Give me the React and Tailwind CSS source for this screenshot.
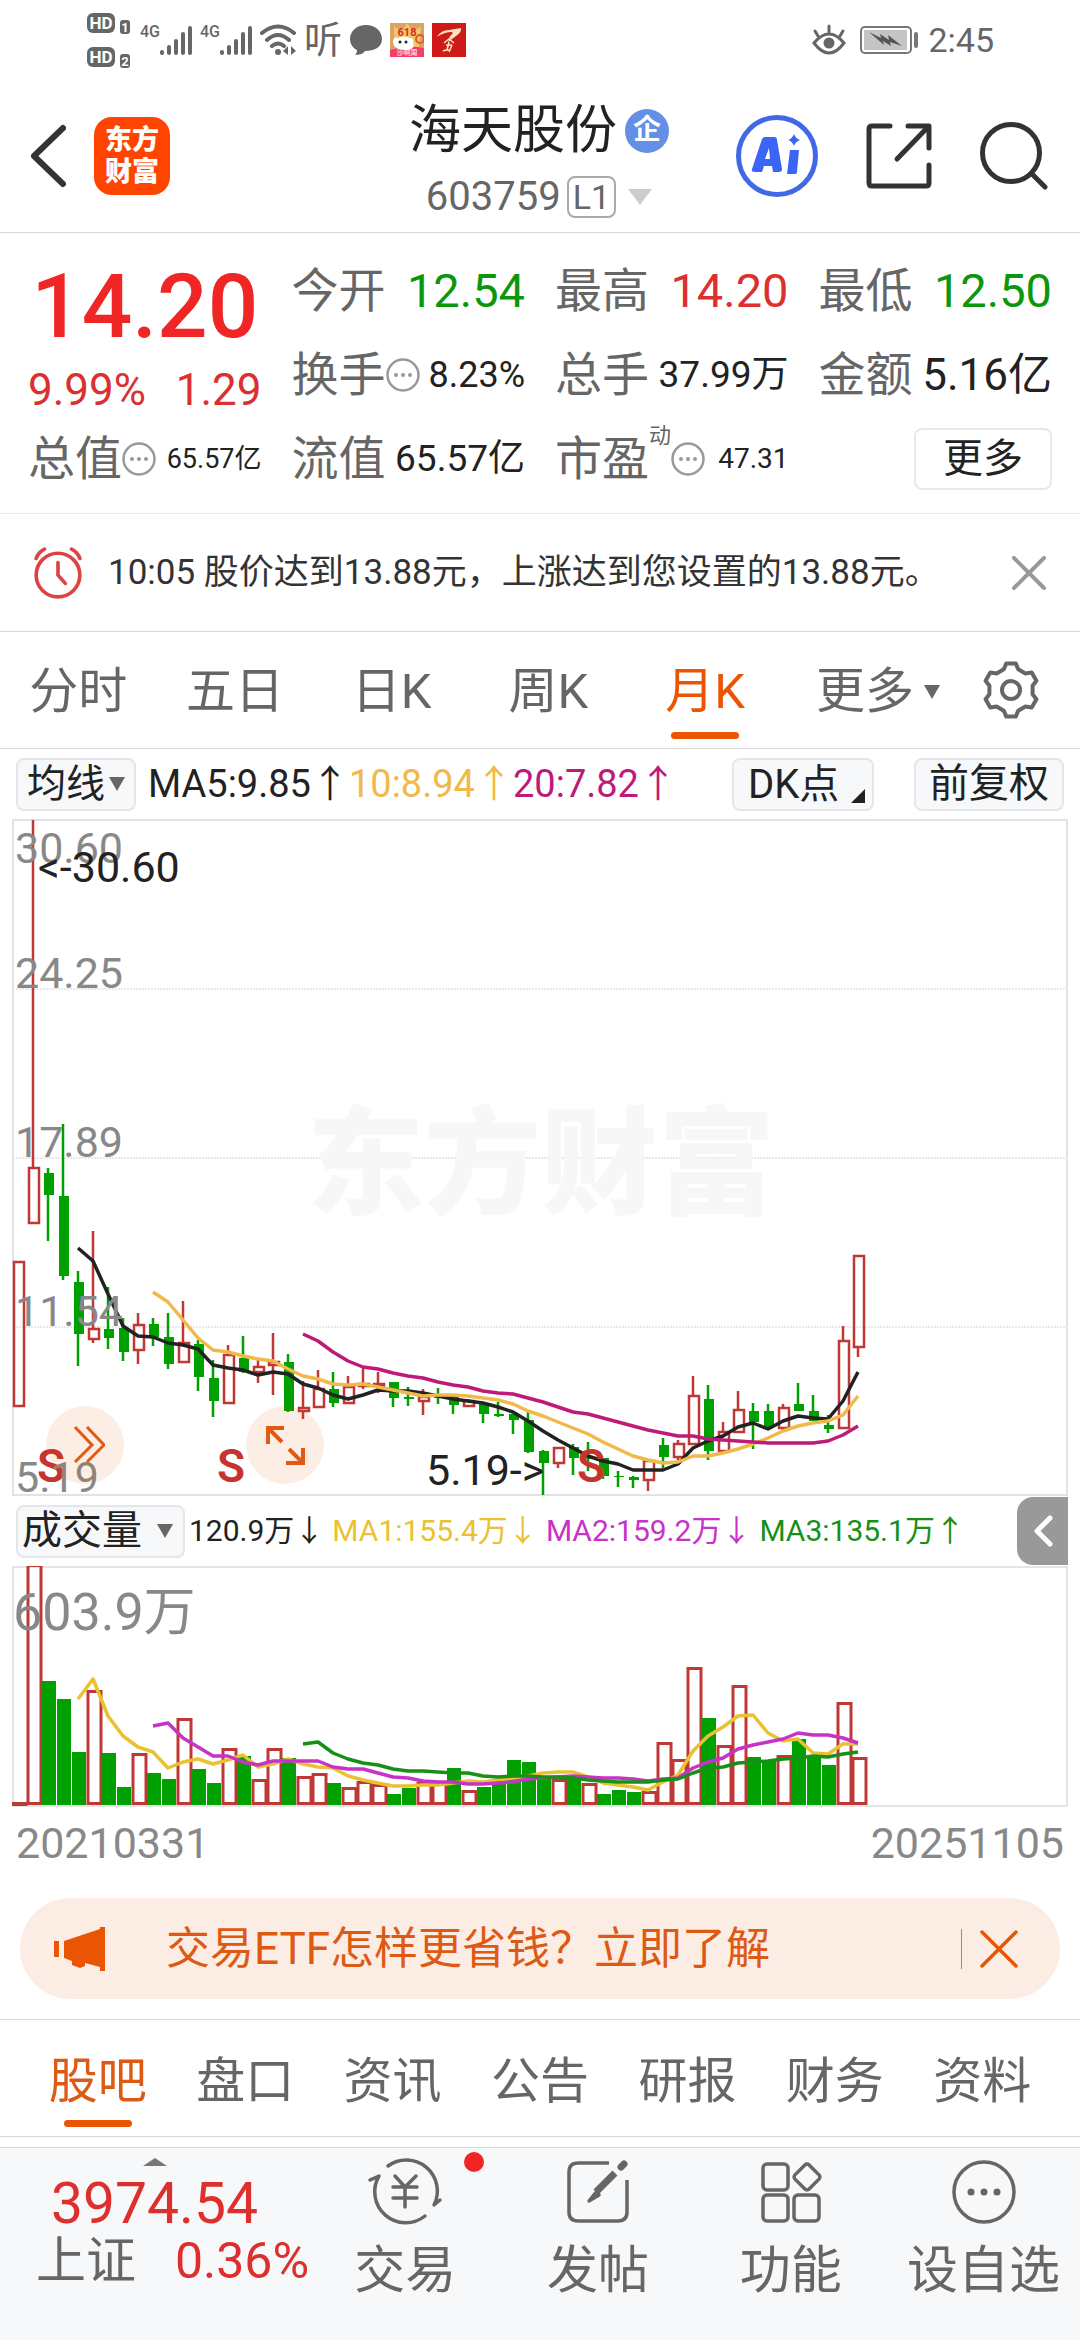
import React, { useState } from "react";

// [open side, wick top, body top, body bottom, wick bottom], in chart units
const candles = [
    ["r", 1260, 1260, 1406, 1406], ["r", 819, 1166, 1223, 1223], ["g", 1167, 1172, 1194, 1240], ["g", 1123, 1195, 1275, 1279],
    ["g", 1270, 1281, 1333, 1365], ["r", 1230, 1327, 1339, 1342], ["g", 1286, 1328, 1337, 1348], ["g", 1317, 1327, 1351, 1360],
    ["r", 1312, 1323, 1350, 1363], ["g", 1317, 1323, 1336, 1345], ["g", 1312, 1336, 1363, 1368], ["r", 1300, 1341, 1362, 1362],
    ["g", 1339, 1343, 1376, 1390], ["g", 1359, 1377, 1400, 1416], ["r", 1344, 1353, 1403, 1403], ["g", 1335, 1357, 1371, 1372],
    ["r", 1359, 1365, 1372, 1382], ["r", 1332, 1360, 1365, 1394], ["g", 1353, 1361, 1410, 1411], ["r", 1380, 1406, 1411, 1418],
    ["r", 1369, 1387, 1407, 1407], ["g", 1371, 1388, 1402, 1406], ["r", 1375, 1385, 1403, 1403], ["r", 1367, 1382, 1386, 1388],
    ["r", 1371, 1382, 1386, 1392], ["g", 1381, 1381, 1397, 1406], ["g", 1386, 1396, 1398, 1405], ["r", 1388, 1395, 1401, 1414],
    ["g", 1387, 1395, 1397, 1403], ["g", 1395, 1395, 1404, 1413], ["r", 1398, 1399, 1406, 1406], ["g", 1402, 1402, 1413, 1422],
    ["g", 1401, 1413, 1415, 1416], ["g", 1413, 1413, 1419, 1433], ["g", 1410, 1419, 1451, 1452], ["g", 1449, 1450, 1462, 1494],
    ["r", 1446, 1446, 1463, 1467], ["g", 1443, 1446, 1457, 1474], ["g", 1441, 1455, 1458, 1470], ["g", 1457, 1457, 1475, 1478],
    ["g", 1470, 1475, 1476, 1486], ["g", 1475, 1476, 1479, 1487], ["r", 1459, 1459, 1480, 1490], ["g", 1437, 1444, 1456, 1467],
    ["r", 1439, 1442, 1457, 1459], ["r", 1375, 1394, 1444, 1444], ["g", 1384, 1398, 1450, 1459], ["r", 1421, 1430, 1451, 1451],
    ["r", 1390, 1408, 1432, 1432], ["g", 1402, 1410, 1421, 1448], ["g", 1403, 1410, 1427, 1428], ["r", 1403, 1406, 1428, 1431],
    ["g", 1382, 1403, 1410, 1410], ["g", 1394, 1410, 1420, 1420], ["g", 1414, 1424, 1428, 1432], ["r", 1325, 1339, 1428, 1428],
    ["r", 1254, 1254, 1347, 1356],
];

const ma5 = [1247, 1260, 1293, 1325, 1335, 1336, 1342, 1344, 1348, 1364, 1367, 1369, 1374, 1371, 1373, 1383, 1387, 1394, 1398, 1394, 1389, 1390, 1390, 1392, 1395, 1398, 1400, 1402, 1406, 1411, 1420, 1430, 1439, 1447, 1455, 1460, 1463, 1469, 1469, 1469, 1463, 1447, 1440, 1435, 1426, 1422, 1428, 1420, 1415, 1417, 1418, 1400, 1371];
const ma10 = [1291, 1301, 1319, 1337, 1349, 1351, 1355, 1358, 1360, 1368, 1375, 1378, 1383, 1384, 1383, 1386, 1389, 1392, 1395, 1394, 1394, 1395, 1397, 1399, 1403, 1410, 1415, 1421, 1427, 1433, 1441, 1448, 1455, 1459, 1462, 1461, 1455, 1455, 1452, 1448, 1443, 1437, 1430, 1425, 1422, 1420, 1414, 1395];
const ma20 = [1333, 1340, 1351, 1360, 1366, 1368, 1372, 1375, 1377, 1381, 1384, 1386, 1390, 1392, 1393, 1397, 1401, 1406, 1411, 1413, 1417, 1421, 1425, 1429, 1432, 1435, 1435, 1438, 1439, 1440, 1441, 1442, 1442, 1442, 1442, 1440, 1434, 1425];

// top of each volume bar
const volumes = [
    1801, 1563, 1680, 1698, 1751, 1689, 1752, 1786, 1752, 1772, 1778, 1717, 1768, 1782, 1747, 1755, 1778, 1747, 1757,
    1775, 1772, 1782, 1786, 1780, 1783, 1793, 1787, 1781, 1782, 1767, 1789, 1786, 1778, 1759, 1761, 1777, 1778, 1776,
    1782, 1793, 1789, 1791, 1790, 1741, 1758, 1666, 1717, 1744, 1684, 1756, 1759, 1754, 1738, 1755, 1764, 1701, 1756,
];
// bars whose colour differs from the candle above them
const redVolumes = [28, 38, 43];

const vol5 = [1698, 1678, 1715, 1735, 1746, 1751, 1767, 1761, 1758, 1763, 1759, 1754, 1766, 1763, 1758, 1763, 1766, 1767, 1775, 1779, 1782, 1785, 1785, 1784, 1784, 1782, 1780, 1781, 1779, 1777, 1775, 1772, 1771, 1771, 1776, 1782, 1784, 1786, 1789, 1781, 1774, 1750, 1735, 1726, 1715, 1714, 1732, 1740, 1738, 1752, 1753, 1743, 1743];
const vol10 = [1725, 1722, 1737, 1746, 1755, 1755, 1761, 1764, 1760, 1760, 1760, 1760, 1766, 1768, 1768, 1772, 1776, 1777, 1780, 1781, 1781, 1783, 1783, 1782, 1781, 1778, 1777, 1776, 1775, 1776, 1777, 1777, 1778, 1780, 1778, 1777, 1767, 1761, 1757, 1748, 1744, 1741, 1738, 1732, 1734, 1734, 1737, 1742];
const vol20 = [1743, 1741, 1752, 1758, 1762, 1764, 1768, 1770, 1770, 1771, 1772, 1772, 1775, 1776, 1775, 1775, 1776, 1776, 1777, 1779, 1780, 1781, 1781, 1781, 1779, 1778, 1772, 1767, 1766, 1762, 1761, 1760, 1758, 1757, 1755, 1756, 1753, 1751];

const RED = "#c03835";
const GREEN = "#00a000";

const xAt = (i) => 18 + 15 * i;

const points = (start, values) => values.map((y, i) => `${xAt(start + i)},${y}`).join(" ");

function Line({ start, values, color }) {
    return <polyline points={points(start, values)} fill="none" stroke={color} strokeWidth="3.500" strokeLinejoin="round" />;
}

function SignalBars() {
    return (
        <svg className="w-8 h-8" viewBox="0 0 32 32" stroke="#666" strokeWidth="4" strokeLinecap="round">
            <path d="M2 28v1M9 23v6M16 17v12M23 10v19M30 4v25" />
        </svg>
    );
}

function StatusBar() {
    return (
        <div className="flex items-center justify-between h-20 px-[86px] text-[#666]">
            <div className="flex items-center">
                <svg className="w-[46px] h-14" viewBox="0 0 46 56" fill="#666">
                    <rect x="1" y="1" width="28" height="20" rx="6" />
                    <rect x="34" y="8" width="10" height="14" rx="3" />
                    <rect x="1" y="35" width="28" height="20" rx="6" />
                    <rect x="34" y="42" width="10" height="14" rx="3" />
                    <g fill="#fff" fontFamily="Roboto, sans-serif" fontWeight="700" textAnchor="middle">
                        <text x="15" y="17" fontSize="17">HD</text>
                        <text x="15" y="51" fontSize="17">HD</text>
                        <text x="39" y="20" fontSize="13">1</text>
                        <text x="39" y="54" fontSize="13">2</text>
                    </g>
                </svg>
                <span className="ml-2 mb-4 text-[16px] leading-4 font-medium">4G</span>
                <SignalBars />
                <span className="ml-2 mb-4 text-[16px] leading-4 font-medium">4G</span>
                <SignalBars />
                <svg className="ml-2 w-9 h-8" viewBox="0 0 36 32" fill="none" stroke="#666" strokeWidth="4" strokeLinecap="round">
                    <path d="M2 9Q18 -4 34 9M7 16Q18 6 29 16M12 22Q18 17 24 22" />
                    <circle cx="18" cy="28" r="3" fill="#666" stroke="none" />
                    <path d="M28 22v9l-5-4zM31 22v9l5-4z" fill="#666" stroke="none" />
                </svg>
                <span className="ml-2 text-[38px] leading-8">听</span>
                <svg className="ml-2 w-8 h-8" viewBox="0 0 32 32" fill="#666">
                    <path d="M16 1C7 1 0 7 0 15c0 5 3 9 7 11 0 3-1 4-2 5 4 0 8-1 10-4 10 0 17-4 17-12S25 1 16 1z" />
                </svg>
                <svg className="ml-2 w-[34px] h-[34px]" viewBox="0 0 34 34">
                    <rect width="34" height="34" fill="#dba265" />
                    <path d="M4 3l8 6 5-9 6 8 8-4-2 20H4z" fill="#f5c56c" />
                    <path d="M0 27q17-6 34-2v9H0z" fill="#ef3f6b" />
                    <path d="M3 18q1-5 5-3 6-3 12 0 4 0 3 4 3 8-8 8-12 0-12-9z" fill="#fff" />
                    <circle cx="10" cy="19" r="1.5" fill="#222" />
                    <circle cx="16" cy="19" r="1.5" fill="#222" />
                    <circle cx="30" cy="16" r="4" fill="none" stroke="#e05a2a" strokeWidth="2" />
                    <text x="17" y="13" fontSize="11" fontWeight="700" fill="#d8301c" textAnchor="middle">618</text>
                    <text x="17" y="32" fontSize="7" fill="#fff" textAnchor="middle">沙啊周</text>
                </svg>
                <svg className="ml-2 w-[34px] h-[34px]" viewBox="0 0 34 34">
                    <rect width="34" height="34" fill="#d01a1a" />
                    <path d="M5 14Q9 7 17 7l12-2q1 4-5 8l-8 6 2-6q4-3 2-4-8 0-15 5z" fill="#fbe3c0" />
                    <path d="M12 20l5-4 5 4M14 22h6M17 19l-2 8M11 28q5-2 7 0M20 22l-3 7" fill="none" stroke="#fbe3c0" strokeWidth="1.500" />
                </svg>
            </div>
            <div className="flex items-center">
                <svg className="w-[34px] h-8" viewBox="0 0 34 32" fill="none" stroke="#666" strokeWidth="3" strokeLinecap="round">
                    <path d="M2 19Q17 1 32 19Q17 39 2 19zM17 2v6M3 7l3 5M31 7l-3 5" />
                    <circle cx="17" cy="19" r="5.500" fill="#666" stroke="none" />
                </svg>
                <svg className="ml-3.5 w-[60px] h-7" viewBox="0 0 60 28">
                    <rect x="1" y="1" width="50" height="26" rx="4" fill="none" stroke="#777" strokeWidth="2" />
                    <rect x="4" y="4" width="43" height="20" fill="#c4c4c4" />
                    <path d="M9 6l12 6-1-4 9 6-1-5 14 11-12-4 1 4-8-5 1 4z" fill="#555" />
                    <rect x="54" y="6" width="4" height="16" rx="2" fill="#777" />
                </svg>
                <span className="ml-2 text-[34px] leading-9">2:45</span>
            </div>
        </div>
    );
}

function Header() {
    return (
        <header className="grid grid-cols-[1fr_auto_1fr] items-center h-[153px] pl-[30px] pr-8 border-b border-[#d8d8d8]">
            <div className="flex items-center gap-7">
                <button aria-label="返回">
                    <svg className="w-9 h-16" viewBox="0 0 36 64" fill="none" stroke="#333" strokeWidth="6" strokeLinecap="round" strokeLinejoin="round">
                        <path d="M33 4L4 32l29 28" />
                    </svg>
                </button>
                <a href="#home" className="flex flex-col items-center justify-center w-[76px] h-[78px] rounded-[18px] bg-[#ff4400] text-white text-[27px] leading-8 font-black">
                    <span>东方</span>
                    <span>财富</span>
                </a>
            </div>
            <div className="flex flex-col items-center pt-4">
                <div className="flex items-center h-[66px] gap-2">
                    <h1 className="text-[52px] leading-[66px] text-[#222]">海天股份</h1>
                    <span className="w-11 h-11 rounded-full bg-[#6390e6] text-white text-[28px] leading-[42px] font-bold text-center">企</span>
                </div>
                <button className="flex items-center h-[66px] text-[40px] text-[#666]">
                    <span>603759</span>
                    <span className="ml-1.5 px-1 h-[42px] leading-[38px] border-2 border-[#aaa] rounded-lg text-[34px]">L1</span>
                    <svg className="ml-3 w-6 h-4" viewBox="0 0 24 16" fill="#ccc"><path d="M0 0h24L12 16z" /></svg>
                </button>
            </div>
            <div className="flex items-center justify-end gap-12">
                <button aria-label="AI">
                    <svg className="w-[82px] h-[82px]" viewBox="0 0 82 82" fill="#3b66f5">
                        <circle cx="41" cy="41" r="38.500" fill="none" stroke="#4168e6" strokeWidth="5" />
                        <path fillRule="evenodd" d="M26 24q1-2 3-2h9q3 0 3 3l5 29q0 3-3 3h-6l-1-6h-8l-2 6h-7q-4 0-3-3zM33 33l-4 11h5z" />
                        <path d="M54 35h9l-2 22q0 2-2 2h-8z" />
                        <path d="M58 19q2 5 6 6-5 2-6 6-2-5-6-6 4-1 6-6z" />
                    </svg>
                </button>
                <button aria-label="分享">
                    <svg className="w-[66px] h-[66px]" viewBox="0 0 66 66" fill="none" stroke="#333" strokeWidth="5" strokeLinecap="round" strokeLinejoin="round">
                        <path d="M24 3H6Q3 3 3 6v54q0 3 3 3h54q3 0 3-3V42M42 3h21v22M62 4L31 36" />
                    </svg>
                </button>
                <button aria-label="搜索">
                    <svg className="w-[68px] h-[68px]" viewBox="0 0 68 68" fill="none" stroke="#333" strokeWidth="5" strokeLinecap="round">
                        <circle cx="31" cy="31" r="28.500" />
                        <path d="M52 52l13 13" />
                    </svg>
                </button>
            </div>
        </header>
    );
}

function Dots() {
    return (
        <svg className="shrink-0 w-[34px] h-[34px]" viewBox="0 0 34 34" fill="#999">
            <circle cx="17" cy="17" r="15.500" fill="none" stroke="#999" strokeWidth="2.500" />
            <circle cx="10" cy="17" r="2" />
            <circle cx="17" cy="17" r="2" />
            <circle cx="24" cy="17" r="2" />
        </svg>
    );
}

function Quote({ label, dots, sup, children }) {
    return (
        <div className="flex items-center justify-between whitespace-nowrap">
            <div className="flex items-center">
                <span className="text-[47px] text-[#666]">{label}</span>
                {sup && <sup className="self-start text-[22px] leading-6 top-0 text-[#666]">{sup}</sup>}
                {dots && <Dots />}
            </div>
            {children}
        </div>
    );
}

function QuotePanel() {
    return (
        <section className="grid grid-cols-4 auto-rows-[84px] gap-x-[30px] px-[28px] pt-4 pb-3 border-b border-[#ececec] text-[#222]">
            <div className="row-span-2 flex flex-col justify-between pt-4">
                <strong className="text-center text-[89px] leading-[84px] font-medium text-[#f02525]">14.20</strong>
                <div className="flex justify-between text-[44px] leading-[54px] text-[#db302f]">
                    <span>9.99%</span>
                    <span>1.29</span>
                </div>
            </div>
            <Quote label="今开"><span className="text-[47px] text-[#0b970b]">12.54</span></Quote>
            <Quote label="最高"><span className="text-[47px] text-[#db302f]">14.20</span></Quote>
            <Quote label="最低"><span className="text-[47px] text-[#0b970b]">12.50</span></Quote>
            <Quote label="换手" dots><span className="text-[36px]">8.23%</span></Quote>
            <Quote label="总手"><span className="text-[37px]">37.99万</span></Quote>
            <Quote label="金额"><span className="text-[44px]">5.16亿</span></Quote>
            <Quote label="总值" dots><span className="text-[27px]">65.57亿</span></Quote>
            <Quote label="流值"><span className="text-[37px]">65.57亿</span></Quote>
            <Quote label="市盈" sup="动" dots><span className="text-[28px]">47.31</span></Quote>
            <div className="flex items-center justify-end">
                <button className="w-[138px] h-[62px] border-2 border-[#e8e8e8] rounded-lg text-[40px] leading-none">更多</button>
            </div>
        </section>
    );
}

function AlertBar() {
    return (
        <div className="flex items-center h-[118px] px-[34px] border-b border-[#d8d8d8]">
            <svg className="w-[48px] h-[52px]" viewBox="0 0 46 50" fill="none" stroke="#dd4343" strokeWidth="3.500" strokeLinecap="round">
                <circle cx="23" cy="27" r="21" />
                <path d="M23 15v12l7 8M2 11Q4 5 10 2M44 11Q42 5 36 2" />
            </svg>
            <p className="grow ml-[26px] text-[35px] leading-[50px] text-[#333]">10:05 股价达到13.88元，上涨达到您设置的13.88元。</p>
            <button aria-label="关闭">
                <svg className="w-[34px] h-[34px]" viewBox="0 0 34 34" stroke="#999" strokeWidth="4" strokeLinecap="round">
                    <path d="M2 2l30 30M32 2L2 32" />
                </svg>
            </button>
        </div>
    );
}

const gearPath = [-90, -30, 30, 90, 150, 210]
    .flatMap((a) => [[a - 19, 22], [a - 10, 27], [a + 10, 27], [a + 19, 22]])
    .map(([a, r]) => `${(29 + r * Math.cos((a * Math.PI) / 180)).toFixed(1)},${(29 + r * Math.sin((a * Math.PI) / 180)).toFixed(1)}`)
    .join(" ");

function PeriodTabs() {
    const [active, setActive] = useState("月K");

    return (
        <nav className="flex items-stretch h-[117px] border-b border-[#d8d8d8] text-[49px] text-[#666]">
            {["分时", "五日", "日K", "周K", "月K"].map((tab) => (
                <button key={tab} onClick={() => setActive(tab)} className={tab === active ? "relative flex-1 pt-1 text-[#ea5504]" : "relative flex-1 pt-1"}>
                    {tab}
                    {tab === active && <span className="absolute bottom-[9px] left-1/2 -translate-x-1/2 w-[68px] h-[7px] rounded-full bg-[#ea5504]" />}
                </button>
            ))}
            <button className="flex-1 flex items-center justify-end gap-2.5 pt-1 pr-0.5">
                更多
                <svg className="w-4 h-3.5" viewBox="0 0 16 14" fill="#666"><path d="M0 0h16L8 14z" /></svg>
            </button>
            <button className="flex items-center justify-center w-[138px]" aria-label="设置">
                <svg className="w-[58px] h-[58px]" viewBox="0 0 58 58" fill="none" stroke="#666" strokeWidth="4" strokeLinejoin="round">
                    <polygon points={gearPath} />
                    <circle cx="29" cy="29" r="9" />
                </svg>
            </button>
        </nav>
    );
}

function PriceChart() {
    return (
        <div className="relative mx-3">
            <svg className="block w-full h-auto" viewBox="12 818 1056 677">
                <rect x="13" y="819" width="1054" height="675" fill="none" stroke="#e2e2e2" strokeWidth="2" />
                <path d="M13 988H1067M13 1157H1067M13 1326H1067" stroke="#e8e8e8" strokeWidth="2" strokeDasharray="2 1" />
                <text x="541" y="1204" fontSize="117" fontWeight="900" fill="#f7f7f7" textAnchor="middle">东方财富</text>
                {candles.map(([side, high, top, bottom, low], i) => {
                    const x = xAt(i);
                    const color = side === "r" ? RED : GREEN;
                    return (
                        <g key={i}>
                            <path d={`M${x} ${high}V${top}M${x} ${bottom}V${low}`} stroke={color} strokeWidth="2.500" />
                            {side === "r" ? (
                                <rect x={x - 4} y={top + 1} width="10" height={bottom - top - 2} fill="none" stroke={color} strokeWidth="2.500" />
                            ) : (
                                <rect x={x - 4} y={top} width="10" height={bottom - top} fill={color} />
                            )}
                        </g>
                    );
                })}
                <Line start={4} values={ma5} color="#222" />
                <Line start={9} values={ma10} color="#f0b94a" />
                <Line start={19} values={ma20} color="#be1a7a" />
                <g fontSize="46" fontWeight="600" fill="#c63430">
                    <text x="37" y="1481">S</text>
                    <text x="217" y="1481">S</text>
                    <text x="577" y="1481">S</text>
                </g>
                <g fontSize="43" fill="#888">
                    <text x="15" y="862">30.60</text>
                    <text x="15" y="987">24.25</text>
                    <text x="15" y="1156">17.89</text>
                    <text x="15" y="1325">11.54</text>
                    <text x="15" y="1491">5.19</text>
                </g>
                <g fontSize="43" fill="#222">
                    <text x="38" y="881">&lt;-30.60</text>
                    <text x="426" y="1484">5.19-&gt;</text>
                </g>
            </svg>
            <button aria-label="平移" className="absolute left-[34px] bottom-3 flex items-center justify-center w-[78px] h-[78px] rounded-full bg-[#ea5504]/10">
                <svg className="w-10 h-10" viewBox="0 0 40 40" fill="none" stroke="#e05a14" strokeWidth="3">
                    <path d="M10 2l17 18L10 37M22 2l17 18-17 17" />
                </svg>
            </button>
            <button aria-label="放大" className="absolute left-[234px] bottom-3 flex items-center justify-center w-[78px] h-[78px] rounded-full bg-[#ea5504]/10">
                <svg className="w-10 h-10" viewBox="0 0 40 40" fill="none" stroke="#e05a14" strokeWidth="4">
                    <path d="M3 19V3h16M4 4l13 13M38 23v15H21M37 37L24 24" />
                </svg>
            </button>
        </div>
    );
}

function VolumeChart() {
    return (
        <svg className="block w-full h-auto px-3" viewBox="12 1565 1056 242">
            <rect x="13" y="1566" width="1054" height="239" fill="none" stroke="#ccc" />
            {volumes.map((top, i) => {
                const x = xAt(i);
                if (candles[i][0] === "r" || redVolumes.includes(i)) {
                    return <rect key={i} x={x - 5} y={top + 1.5} width="13" height={Math.max(1802 - top - 1, 1)} fill="none" stroke={RED} strokeWidth="3" />;
                }
                return <rect key={i} x={x - 6} y={top} width="14" height={1804 - top} fill={GREEN} />;
            })}
            <Line start={4} values={vol5} color="#eac130" />
            <Line start={9} values={vol10} color="#c633c6" />
            <Line start={19} values={vol20} color="#179017" />
            <text x="13" y="1629" fontSize="52" fill="#888">603.9万</text>
        </svg>
    );
}

function ChartSection() {
    return (
        <section>
            <div className="flex items-center h-[70px] px-4 text-[38px] leading-none whitespace-nowrap">
                <button className="flex items-center justify-center gap-1 w-[120px] h-[53px] border-2 border-[#e4e6ea] rounded-lg bg-[#f7f8fa] text-[39px] text-[#222]">
                    均线
                    <svg className="w-4 h-3.5" viewBox="0 0 16 14" fill="#666"><path d="M0 0h16L8 14z" /></svg>
                </button>
                <span className="ml-3 text-[#222]">MA5:9.85↑</span>
                <span className="text-[#f0b94a]">10:8.94↑</span>
                <span className="text-[#be1a7a]">20:7.82↑</span>
                <button className="flex items-end ml-auto pl-3.5 w-[142px] h-[53px] border-2 border-[#e4e6ea] rounded-lg bg-[#f7f8fa] text-[40px] text-[#222]">
                    <span className="leading-[49px]">DK点</span>
                    <svg className="ml-3 mb-1.5 w-3.5 h-3.5" viewBox="0 0 14 14" fill="#222"><path d="M14 0v14H0z" /></svg>
                </button>
                <button className="ml-10 w-[150px] h-[53px] border-2 border-[#e4e6ea] rounded-lg bg-[#f7f8fa] text-[40px] text-[#222]">前复权</button>
            </div>
            <PriceChart />
            <div className="flex items-center h-[70px] pl-4 pr-3 text-[30px] leading-none whitespace-nowrap">
                <button className="flex items-center justify-between pl-1 pr-2.5 w-[169px] h-[53px] border-2 border-[#e4e6ea] rounded-lg bg-[#f7f8fa] text-[40px] text-[#222]">
                    成交量
                    <svg className="w-4 h-3.5" viewBox="0 0 16 14" fill="#666"><path d="M0 0h16L8 14z" /></svg>
                </button>
                <div className="flex gap-2 ml-1">
                    <span className="text-[#222]">120.9万↓</span>
                    <span className="text-[#eac130]">MA1:155.4万↓</span>
                    <span className="text-[#c633c6]">MA2:159.2万↓</span>
                    <span className="text-[#179017]">MA3:135.1万↑</span>
                </div>
                <button aria-label="展开" className="ml-auto flex items-center justify-center w-[51px] h-[68px] rounded-l-2xl bg-[#999]">
                    <svg className="w-5 h-8" viewBox="0 0 20 32" fill="none" stroke="#fff" strokeWidth="5" strokeLinecap="round" strokeLinejoin="round">
                        <path d="M17 3L4 16l13 13" />
                    </svg>
                </button>
            </div>
            <VolumeChart />
            <div className="flex justify-between h-[70px] px-4 text-[43px] leading-[70px] text-[#888]">
                <time>20210331</time>
                <time>20251105</time>
            </div>
        </section>
    );
}

function Promo() {
    return (
        <div className="flex items-center h-[101px] mx-5 my-5 pl-[34px] pr-[42px] rounded-full bg-[#fcede4] text-[#dd5a14]">
            <svg className="w-[51px] h-11" viewBox="0 0 51 44" fill="#ea5504">
                <path d="M0 14h5v16H0zM10 14L46 2V0h5v44h-5v-4l-15-4v3l-5 2-8-3v-4l-8-3z" />
            </svg>
            <a href="#etf" className="grow ml-[61px] text-[44px] leading-[60px]">交易ETF怎样更省钱？立即了解</a>
            <span className="w-px h-10 bg-[#dd7a40]" />
            <button aria-label="关闭" className="ml-[18px]">
                <svg className="w-[38px] h-[38px]" viewBox="0 0 38 38" stroke="#ea5504" strokeWidth="3.500" strokeLinecap="round">
                    <path d="M2 2l34 34M36 2L2 36" />
                </svg>
            </button>
        </div>
    );
}

function InfoTabs() {
    const [active, setActive] = useState("股吧");

    return (
        <nav className="flex h-[118px] px-6 mb-2.5 border-y border-[#d8d8d8] text-[49px] text-[#666]">
            {["股吧", "盘口", "资讯", "公告", "研报", "财务", "资料"].map((tab) => (
                <button key={tab} onClick={() => setActive(tab)} className={tab === active ? "relative flex-1 pt-2 text-[#dd5a14]" : "relative flex-1 pt-2"}>
                    {tab}
                    {tab === active && <span className="absolute bottom-[9px] left-1/2 -translate-x-1/2 w-[68px] h-[7px] rounded-full bg-[#ea5504]" />}
                </button>
            ))}
        </nav>
    );
}

function NavItem({ label, badge, children }) {
    return (
        <button className="relative flex-1 flex flex-col items-center pt-[11px] text-[51px] leading-[60px] text-[#666]">
            <svg className="mb-4 w-[74px] h-[66px] overflow-visible" viewBox="0 0 74 66" fill="none" stroke="#666" strokeWidth="3.500" strokeLinecap="round" strokeLinejoin="round">
                {children}
            </svg>
            {label}
            {badge && <span className="absolute top-1 left-[155px] w-5 h-5 rounded-full bg-[#f02525]" />}
        </button>
    );
}

function BottomNav() {
    return (
        <footer className="flex h-[193px] border-t border-[#d8d8d8] bg-[#f7f8fa]">
            <a href="#index" className="flex flex-col items-center w-[309px] pt-2.5 text-[#dd2f2d]">
                <svg className="w-6 h-2" viewBox="0 0 24 8" fill="#777"><path d="M12 0l12 8H0z" /></svg>
                <span className="mt-2 text-[57px] leading-[60px]">3974.54</span>
                <span className="flex items-center justify-between w-full pl-9 pr-0 text-[50px] leading-[54px]">
                    <span className="text-[#666]">上证</span>
                    <span>0.36%</span>
                </span>
            </a>
            <NavItem label="交易" badge>
                <path d="M20 7A31 31 0 0 1 66 46l6-5M57 57A31 31 0 0 1 11 17L2 21" />
                <path d="M27 17l10 11 11-11M25 28h24M25 39h24M37 28v20" />
            </NavItem>
            <NavItem label="发帖">
                <path d="M48 4H17Q8 4 8 13v40q0 9 9 9h40q9 0 9-9V21" strokeLinecap="butt" />
                <path d="M35 33l19-19" strokeWidth="7" strokeLinecap="butt" />
                <path d="M36 32l-8 10 10-6z" />
                <path d="M60 8l3-3" strokeWidth="7" />
            </NavItem>
            <NavItem label="功能">
                <rect x="9" y="5" width="25" height="26" rx="4" />
                <rect x="9" y="36" width="25" height="26" rx="4" />
                <rect x="40" y="36" width="25" height="26" rx="4" />
                <rect x="43" y="8" width="20" height="20" rx="3" transform="rotate(45 53 18)" />
            </NavItem>
            <NavItem label="设自选">
                <circle cx="37" cy="33" r="30" />
                <g fill="#666" stroke="none">
                    <circle cx="24" cy="33" r="3.500" />
                    <circle cx="37" cy="33" r="3.500" />
                    <circle cx="50" cy="33" r="3.500" />
                </g>
            </NavItem>
        </footer>
    );
}

export default function App() {
    return (
        <main className="bg-white font-['Roboto','Noto_Sans_CJK_SC',sans-serif]" lang="zh-CN">
            <StatusBar />
            <Header />
            <QuotePanel />
            <AlertBar />
            <PeriodTabs />
            <ChartSection />
            <Promo />
            <InfoTabs />
            <BottomNav />
        </main>
    );
}
